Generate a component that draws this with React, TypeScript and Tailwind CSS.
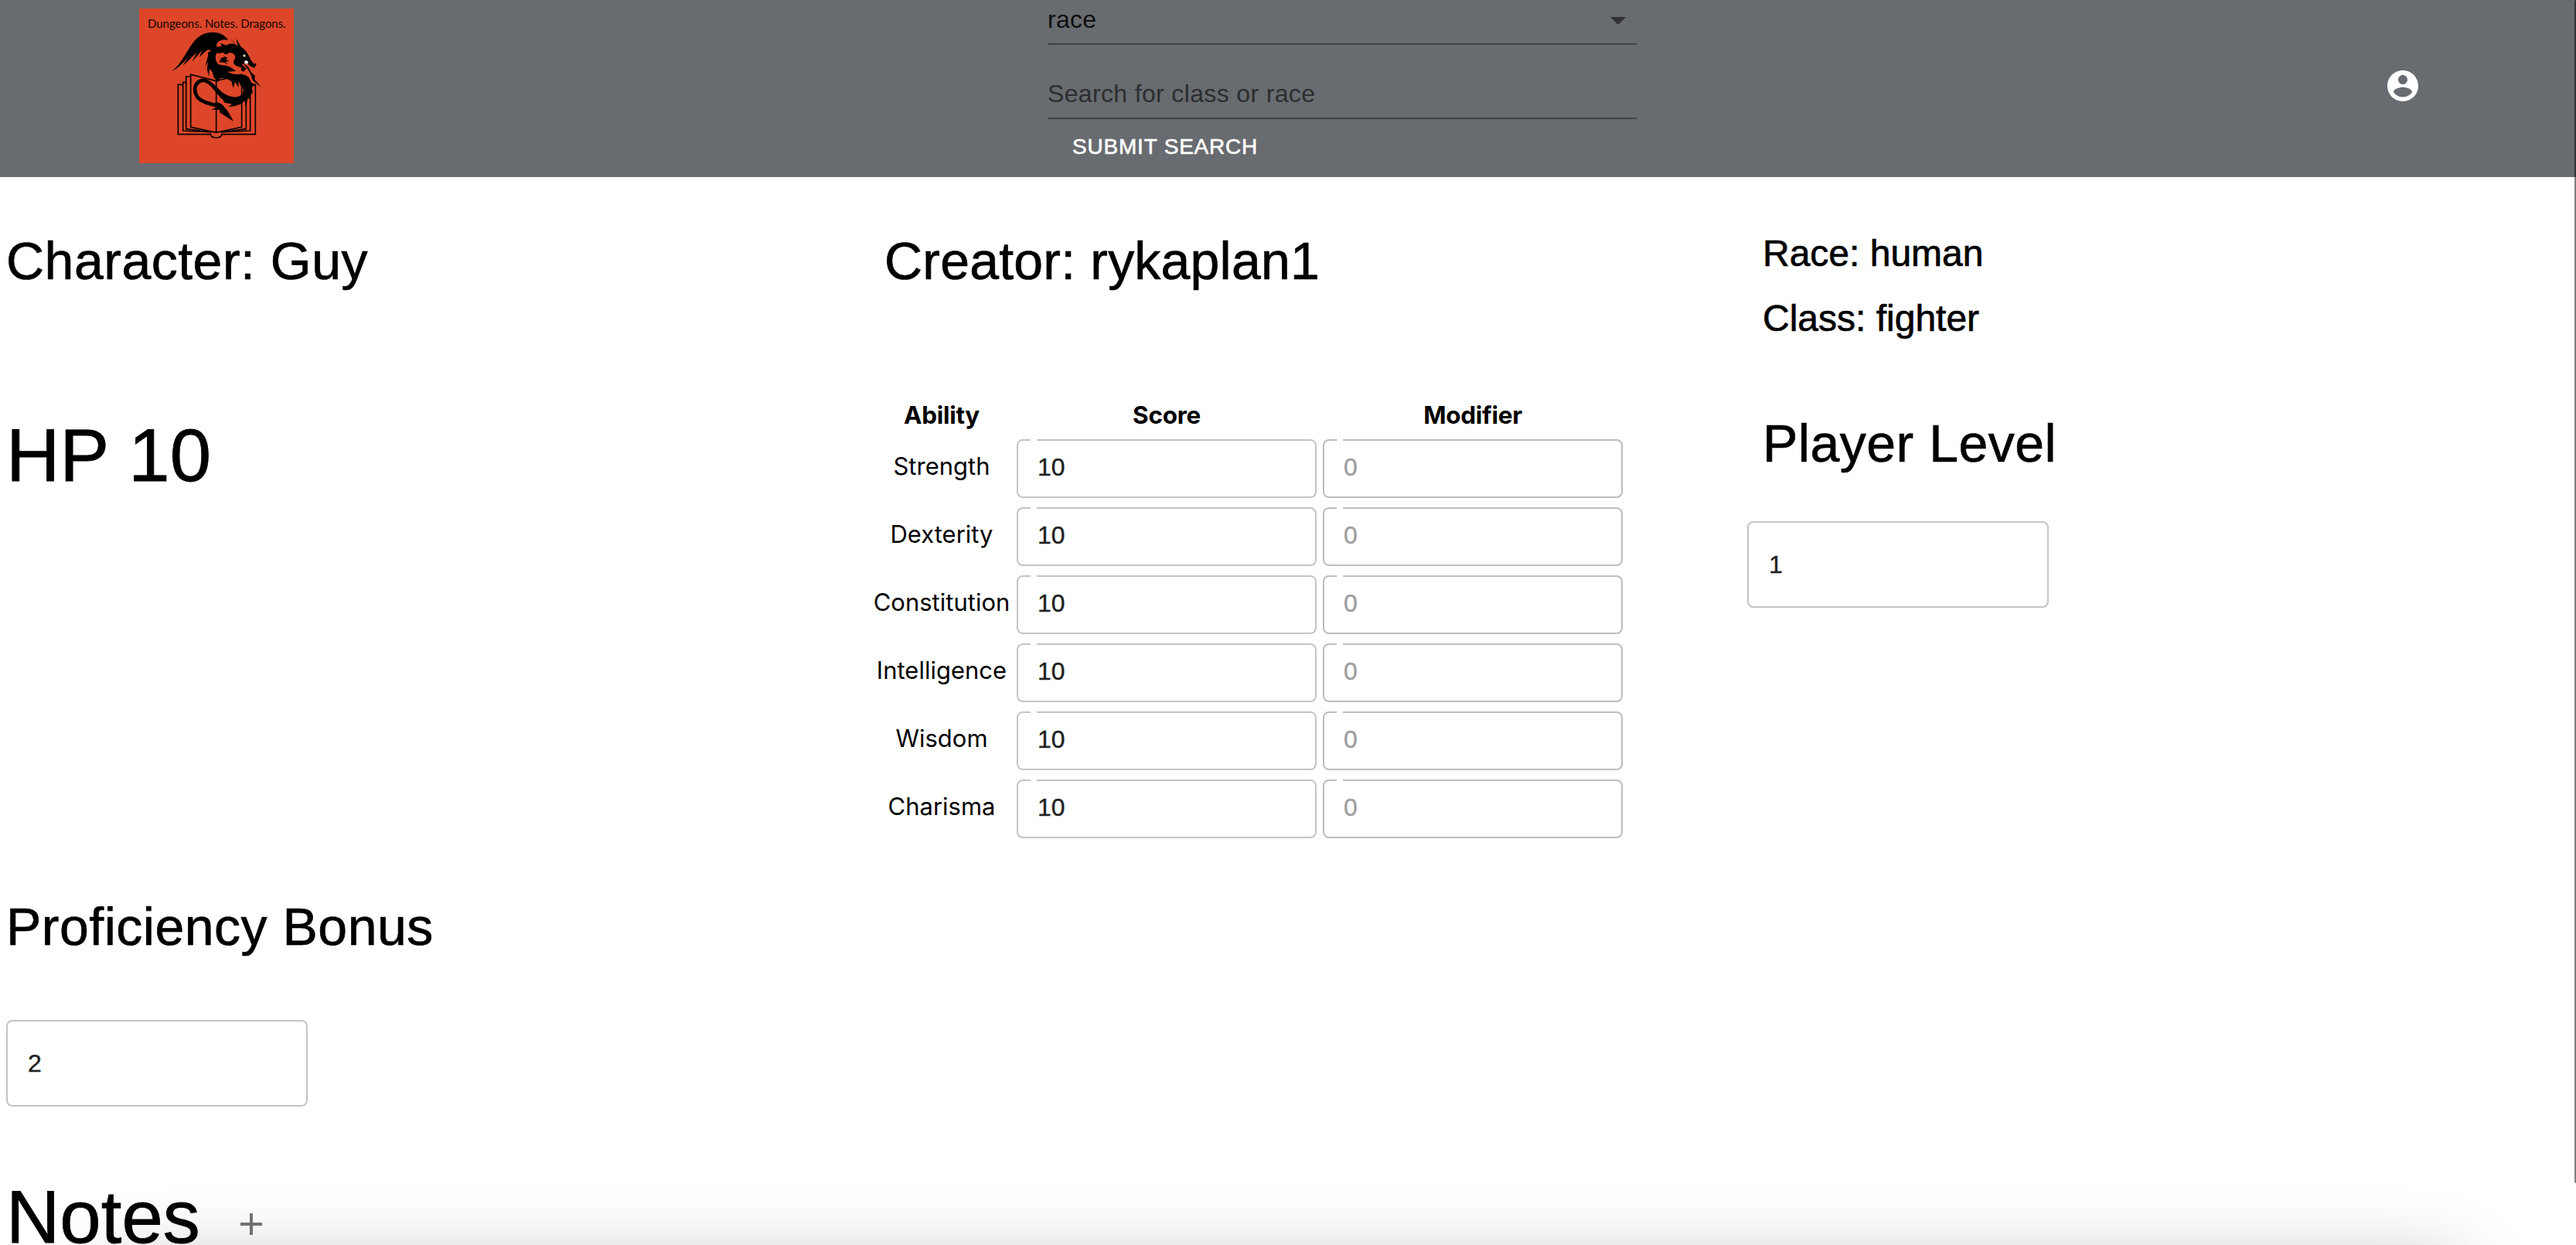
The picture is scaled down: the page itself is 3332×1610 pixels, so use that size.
import React from "react";

const abilities = ["Strength", "Dexterity", "Constitution", "Intelligence", "Wisdom", "Charisma"];

function Logo() {
  return (
    <svg className="ml-[180px] mt-[11px] size-[200px] shrink-0" viewBox="60 34 600 600">
      <rect x="60" y="34" width="600" height="600" fill="#dd4629" />
      <text x="93" y="108" fontFamily="Lato, sans-serif" fontSize="45" textLength="536" fill="#150604">
        Dungeons. Notes. Dragons.
      </text>
      {/* open book */}
      <g fill="none" stroke="#0c0301" strokeWidth="5">
        <path d="M228 329H211V522H337C340 540 378 540 381 522H511V329H493" />
        <path d="M241 320H230V508L340 513M481 320H491V508L378 513" />
        <path d="M259 298H242V501L340 514M462 298H475V501L378 514" />
        <path d="M359 315L260 290V494L359 515L458 494V290L359 315V515" />
      </g>
      {/* wing */}
      <path d="M186 278C222 252 243 200 270 165C292 138 318 126 345 126C372 126 394 138 406 157C388 152 366 156 360 176L362 188L340 200C334 192 326 193 318 200L294 222L304 196L264 242L284 204L230 256L256 210C238 240 216 262 186 278Z" />
      {/* head and neck */}
      <path d="M360 183L381 180L375 169L400 177C408 168 424 170 432 174L414 148L436 176L442 178L437 151L456 183C472 193 484 210 493 233L504 248L516 248L508 264L495 260L483 250L470 246L458 250L476 268L464 279L454 272L458 264L436 256C424 250 423 238 432 230C436 214 426 206 410 205L397 213L384 204L372 209L362 206C352 222 356 240 368 251C386 257 402 254 414 262L437 277L400 279L424 288L470 291L486 302L494 320L508 330L497 340L501 360L493 368L491 385L482 382L473 414L470 391C456 409 430 414 406 415L421 405L392 399L382 384L370 378C400 382 438 384 455 370C470 360 466 338 452 330L445 314L446 341L432 318L425 343L418 317L398 305L375 303L366 320L350 302L344 280L333 268L330 297L323 268L328 240L316 260L328 214L326 204L342 198Z" />
      <path d="M368 242L382 231L370 235L383 223L394 225L386 218L404 225L396 232L410 238L394 240L406 251L388 243Z" />
      <path d="M462 246L483 260L494 281L510 296L508 308L533 340L500 312L494 292L482 270Z" />
      {/* tail */}
      <path
        d="M455 390C410 402 380 378 356 346C335 318 313 308 297 315C270 328 272 362 290 382C307 398 334 405 366 410"
        fill="none"
        stroke="#000"
        strokeWidth="14"
      />
      <path d="M362 396L382 406L404 432L426 472L372 437L374 427L340 426L358 419L342 408L362 408Z" />
      <path d="M356 332C380 362 404 379 440 378L462 366L478 382L440 404L404 397C380 388 364 366 346 344Z" />
      <ellipse cx="476" cy="242" rx="8" ry="6" fill="#fff" transform="rotate(20 476 242)" />
      <ellipse cx="468" cy="217" rx="5" ry="4" fill="#fff" transform="rotate(30 468 217)" />
    </svg>
  );
}

function Header() {
  return (
    <header className="flex h-[229px] items-start overflow-hidden bg-[#686b70]">
      <Logo />
      <div className="ml-[975px] flex w-[762px] shrink-0 flex-col text-[32px]">
        <div className="flex h-[58px] justify-between border-b-2 border-[#414244] text-[#0e0e0f]">
          <span className="mt-[5px] leading-10 tracking-[0.3px]">race</span>
          <svg className="mr-3.5 mt-[22px] h-2.5 w-5" viewBox="0 0 20 10">
            <path d="M0 0L10 10L20 0Z" fill="#303134" />
          </svg>
        </div>
        <div className="h-24 border-b-2 border-[#414244] pt-[43px] leading-10 tracking-[0.35px] text-[#2c2d2f]">
          Search for class or race
        </div>
        <button className="ml-8 mt-[16px] self-start text-[28px] leading-10 tracking-[0.8px] text-white [-webkit-text-stroke:0.6px_white]">
          SUBMIT SEARCH
        </button>
      </div>
      <svg className="ml-[967px] mt-[87px] size-12 shrink-0" viewBox="0 0 24 24" fill="#fff">
        <path d="M12 2C6.48 2 2 6.48 2 12s4.48 10 10 10 10-4.48 10-10S17.52 2 12 2zm0 3c1.66 0 3 1.34 3 3s-1.34 3-3 3-3-1.34-3-3 1.34-3 3-3zm0 14.2c-2.5 0-4.71-1.28-6-3.22.03-1.99 4-3.08 6-3.08 1.99 0 5.97 1.09 6 3.08-1.29 1.94-3.5 3.22-6 3.22z" />
      </svg>
    </header>
  );
}

function ScoreBox({ value, disabled = false }: { value: string; disabled?: boolean }) {
  return (
    <div
      className={
        disabled
          ? "relative h-[76px] w-[388px] rounded-lg border-2 border-[#bdbdbd] pl-[25px] pt-[14px] font-['Liberation_Sans',Arial,sans-serif] leading-10 text-[#9e9e9e] [-webkit-text-stroke:0.4px]"
          : "relative h-[76px] w-[388px] rounded-lg border-2 border-[#c4c4c4] pl-[25px] pt-[14px] font-['Liberation_Sans',Arial,sans-serif] leading-10 text-[#212121] [-webkit-text-stroke:0.4px]"
      }
    >
      <span className="absolute -top-0.5 left-4 h-0.5 w-2 bg-white" />
      {value}
    </div>
  );
}

function AbilityTable() {
  return (
    <div className="-ml-[17px] grid w-[972px] grid-cols-[180px_388px_388px] content-start gap-x-2 font-['Inter',sans-serif] text-[32px]">
      <div className="h-[50px] pl-0.5 text-center text-[31.5px] font-bold leading-[38px] tracking-[-0.3px]">Ability</div>
      <div className="h-[50px] text-center text-[31.5px] font-bold leading-[38px] tracking-[-0.3px]">Score</div>
      <div className="h-[50px] text-center text-[31.5px] font-bold leading-[38px] tracking-[-0.3px]">Modifier</div>
      {abilities.map((name) => (
        <React.Fragment key={name}>
          <div className="h-[88px] whitespace-nowrap pl-0.5 pt-[15px] text-center text-[31px] leading-10">{name}</div>
          <ScoreBox value="10" />
          <ScoreBox value="0" disabled />
        </React.Fragment>
      ))}
    </div>
  );
}

export default function App() {
  return (
    <div className="relative h-screen w-full overflow-hidden bg-white font-['Liberation_Sans',Arial,sans-serif] text-black">
      <Header />
      <main className="px-2">
        <section className="grid h-[289px] grid-cols-[1136px_1136px_1fr] pt-[66px] [-webkit-text-stroke:0.7px]">
          <h4 className="text-[68px] leading-[84px] tracking-[0.5px]">Character: Guy</h4>
          <h4 className="text-[68px] leading-[84px] tracking-[0.2px]">Creator: rykaplan1</h4>
          <div className="flex flex-col gap-5 pt-px text-[48px] leading-[64px]">
            <h5>Race: human</h5>
            <h5>Class: fighter</h5>
          </div>
        </section>
        <section className="grid h-[638px] grid-cols-[1136px_1136px_1fr]">
          <h3 className="pt-[15px] text-[96px] leading-[112px] [-webkit-text-stroke:0.8px]">HP 10</h3>
          <AbilityTable />
          <div>
            <h4 className="pt-[13px] text-[68px] leading-[84px] tracking-[0.5px] [-webkit-text-stroke:0.7px]">Player Level</h4>
            <div className="-ml-5 mt-[59px] h-28 w-[390px] rounded-lg border-2 border-[#c4c4c4] pl-[26px] pt-[32px] text-[32px] leading-[44px] text-[#212121] [-webkit-text-stroke:0.4px]">
              1
            </div>
          </div>
        </section>
        <section className="flex flex-col">
          <h4 className="text-[68px] leading-[84px] tracking-[0.5px] [-webkit-text-stroke:0.7px]">Proficiency Bonus</h4>
          <div className="mt-[79px] h-28 w-[390px] rounded-lg border-2 border-[#c4c4c4] pl-[26px] pt-[32px] text-[32px] leading-[44px] text-[#212121] [-webkit-text-stroke:0.4px]">
            2
          </div>
          <div className="mt-[107px] flex">
            <h3 className="w-[293px] text-[96px] leading-[72px] [-webkit-text-stroke:0.8px]">Notes</h3>
            <svg className="mt-[21px] size-12" viewBox="0 0 24 24" fill="#757575">
              <path d="M19 13h-6v6h-2v-6H5v-2h6V5h2v6h6v2z" />
            </svg>
          </div>
        </section>
      </main>
      <div className="pointer-events-none absolute left-[150px] right-[150px] top-full mt-[30px] h-[200px] rounded-3xl shadow-[0_0_100px_rgba(0,0,0,0.3)]" />
      <div className="absolute right-0 top-0 h-[1530px] w-0.5 rounded-l-sm bg-black/50" />
    </div>
  );
}
